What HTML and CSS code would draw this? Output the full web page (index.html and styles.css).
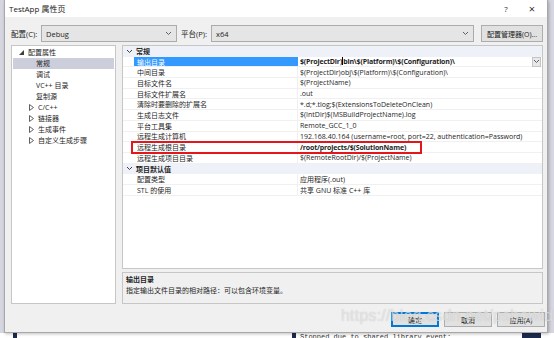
FILE: index.html
```html
<!DOCTYPE html>
<html lang="zh-CN">
<head>
    <meta charset="UTF-8">
    <meta name="viewport" content="width=device-width, initial-scale=1.0">
    <title>TestApp 属性页</title>
    <link rel="stylesheet" href="styles.css">
</head>
<body>
    <div class="screen">
        <div class="dialog">
            <div class="titlebar">
                <span class="title">TestApp 属性页</span>
                <span class="tb-btn tb-help">?</span>
                <span class="tb-btn tb-close">×</span>
            </div>
            <div class="body">
                <div class="config-row">
                    <span class="lbl">配置(C):</span>
                    <div class="combo combo-config">
                        <span>Debug</span>
                        <svg class="chev" width="7" height="5" viewBox="0 0 7 5"><polyline points="1,1 3.5,3.5 6,1" fill="none" stroke="#606060" stroke-width="1"/></svg>
                    </div>
                    <span class="lbl lbl-platform">平台(P):</span>
                    <div class="combo combo-platform">
                        <span>x64</span>
                        <svg class="chev" width="7" height="5" viewBox="0 0 7 5"><polyline points="1,1 3.5,3.5 6,1" fill="none" stroke="#606060" stroke-width="1"/></svg>
                    </div>
                    <button class="btn btn-manager">配置管理器(O)...</button>
                </div>

                <div class="main">
                    <ul class="tree">
                        <li class="node">
                            <svg class="tri" width="5" height="5" viewBox="0 0 5 5"><polygon points="5,0 5,5 0,5" fill="#404040"/></svg>
                            配置属性
                        </li>
                        <li class="leaf selected">常规</li>
                        <li class="leaf">调试</li>
                        <li class="leaf">VC++ 目录</li>
                        <li class="leaf">复制源</li>
                        <li class="branch">
                            <svg class="tri" width="5" height="7" viewBox="0 0 5 7"><polygon points="0.5,0.5 4.5,3.5 0.5,6.5" fill="none" stroke="#606060" stroke-width="1"/></svg>
                            C/C++
                        </li>
                        <li class="branch">
                            <svg class="tri" width="5" height="7" viewBox="0 0 5 7"><polygon points="0.5,0.5 4.5,3.5 0.5,6.5" fill="none" stroke="#606060" stroke-width="1"/></svg>
                            链接器
                        </li>
                        <li class="branch">
                            <svg class="tri" width="5" height="7" viewBox="0 0 5 7"><polygon points="0.5,0.5 4.5,3.5 0.5,6.5" fill="none" stroke="#606060" stroke-width="1"/></svg>
                            生成事件
                        </li>
                        <li class="branch">
                            <svg class="tri" width="5" height="7" viewBox="0 0 5 7"><polygon points="0.5,0.5 4.5,3.5 0.5,6.5" fill="none" stroke="#606060" stroke-width="1"/></svg>
                            自定义生成步骤
                        </li>
                    </ul>

                    <div class="right">
                        <div class="grid">
                            <div class="row category">
                                <svg class="cat-chev" width="7" height="5" viewBox="0 0 7 5"><polyline points="1,1 3.5,3.5 6,1" fill="none" stroke="#404040" stroke-width="1"/></svg>
                                <span class="cat-name">常规</span>
                            </div>
                            <div class="row selected">
                                <span class="gutter"></span>
                                <span class="name">输出目录</span>
                                <span class="value strong">$(ProjectDir)<i class="caret"></i>bin\$(Platform)\$(Configuration)\</span>
                                <span class="drop">
                                    <svg width="7" height="5" viewBox="0 0 7 5"><polyline points="1,1 3.5,3.5 6,1" fill="none" stroke="#606060" stroke-width="1"/></svg>
                                </span>
                            </div>
                            <div class="row"><span class="gutter"></span><span class="name">中间目录</span><span class="value">$(ProjectDir)obj\$(Platform)\$(Configuration)\</span></div>
                            <div class="row"><span class="gutter"></span><span class="name">目标文件名</span><span class="value">$(ProjectName)</span></div>
                            <div class="row"><span class="gutter"></span><span class="name">目标文件扩展名</span><span class="value">.out</span></div>
                            <div class="row"><span class="gutter"></span><span class="name">清除时要删除的扩展名</span><span class="value">*.d;*.tlog;$(ExtensionsToDeleteOnClean)</span></div>
                            <div class="row"><span class="gutter"></span><span class="name">生成日志文件</span><span class="value">$(IntDir)$(MSBuildProjectName).log</span></div>
                            <div class="row"><span class="gutter"></span><span class="name">平台工具集</span><span class="value">Remote_GCC_1_0</span></div>
                            <div class="row"><span class="gutter"></span><span class="name">远程生成计算机</span><span class="value">192.168.40.164 (username=root, port=22, authentication=Password)</span></div>
                            <div class="row"><span class="gutter"></span><span class="name">远程生成根目录</span><span class="value strong">/root/projects/$(SolutionName)</span></div>
                            <div class="row"><span class="gutter"></span><span class="name">远程生成项目目录</span><span class="value">$(RemoteRootDir)/$(ProjectName)</span></div>
                            <div class="row category">
                                <svg class="cat-chev" width="7" height="5" viewBox="0 0 7 5"><polyline points="1,1 3.5,3.5 6,1" fill="none" stroke="#404040" stroke-width="1"/></svg>
                                <span class="cat-name">项目默认值</span>
                            </div>
                            <div class="row"><span class="gutter"></span><span class="name">配置类型</span><span class="value">应用程序(.out)</span></div>
                            <div class="row"><span class="gutter"></span><span class="name">STL 的使用</span><span class="value">共享 GNU 标准 C++ 库</span></div>

                            <div class="mark"></div>
                        </div>
                        <div class="desc">
                            <div class="desc-title">输出目录</div>
                            <div class="desc-text">指定输出文件目录的相对路径：可以包含环境变量。</div>
                        </div>
                    </div>
                </div>

                <div class="actions">
                    <button class="btn btn-ok">确定</button>
                    <button class="btn">取消</button>
                    <button class="btn">应用(A)</button>
                </div>
            </div>
            <div class="watermark">https://blog.csdn.net/psbowid</div>
        </div>
        <div class="below">
            <span class="blk blk-a"></span>
            <span class="blk blk-b"></span>
            <span class="console">Stopped due to shared library event:</span>
            <span class="blk blk-c"></span>
        </div>
    </div>
</body>
</html>
```

FILE: styles.css
```css
* {
    box-sizing: border-box;
}

body {
    margin: 0;
    padding: 0;
    font-family: "Open Sans", "Noto Sans CJK SC", sans-serif;
    font-size: 7px;
    color: #1e1e1e;
    background-color: #d6d6e0;
}

.screen {
    width: 554px;
    height: 338px;
    overflow: hidden;
}

.dialog {
    position: relative;
    width: 544px;
    height: 333px;
    margin-left: 4px;
    background-color: #f0f0f0;
    border: 1px solid #a8a8a8;
    border-top: none;
    box-shadow: 1px 1px 3px rgba(0, 0, 0, 0.25);
}

/* title bar */
.titlebar {
    height: 17px;
    background-color: #ffffff;
    display: flex;
    align-items: center;
    padding-left: 4px;
    font-size: 8px;
}

.title {
    flex: 1;
    color: #202020;
}

.tb-btn {
    width: 26px;
    text-align: center;
    color: #303030;
}

.tb-help {
    font-size: 8px;
}

.tb-close {
    font-size: 11px;
    margin-right: 2px;
}

/* body */
.body {
    padding: 8px 4px 0 6px;
}

.config-row {
    display: flex;
    align-items: center;
    height: 17px;
    font-size: 7.5px;
}

.lbl {
    width: 30px;
    color: #202020;
}

.lbl-platform {
    margin-left: 4px;
}

.combo {
    height: 17px;
    display: flex;
    align-items: center;
    justify-content: space-between;
    padding: 0 4px 0 4px;
    background-color: #e5e5e5;
    border: 1px solid #acacac;
}

.combo-config {
    width: 136px;
}

.combo-platform {
    width: 263px;
}

.btn {
    font-family: "Open Sans", "Noto Sans CJK SC", sans-serif;
    font-size: 7px;
    color: #202020;
    background-color: #e1e1e1;
    border: 1px solid #adadad;
    padding: 0;
    height: 15px;
}

.btn-manager {
    width: 62px;
    height: 17px;
    margin-left: 7px;
}

/* main area */
.main {
    display: flex;
    gap: 6px;
    margin-top: 3px;
    height: 259px;
}

.tree {
    list-style-type: none;
    margin: 0;
    padding: 1px 1px;
    width: 105px;
    background-color: #ffffff;
    border: 1px solid #c6c6c6;
}

.tree li {
    height: 11px;
    line-height: 11px;
    display: flex;
    align-items: center;
    white-space: nowrap;
}

.tree .tri {
    margin-right: 4px;
}

.tree .node {
    padding-left: 6px;
}

.tree .leaf {
    padding-left: 23px;
}

.tree .branch {
    padding-left: 16px;
}

.tree .selected {
    background-color: #cccedb;
}

.right {
    width: 421px;
    display: flex;
    flex-direction: column;
    gap: 3px;
}

/* property grid */
.grid {
    position: relative;
    height: 224px;
    background-color: #ffffff;
    border: 1px solid #c6c6c6;
}

.row {
    display: flex;
    align-items: center;
    height: 10.7px;
    border-bottom: 1px solid #f0f0f0;
    white-space: nowrap;
}

.row.category {
    background-color: #eff1f8;
    border-bottom: none;
}

.cat-chev {
    margin-left: 3px;
}

.cat-name {
    margin-left: 3px;
    font-weight: bold;
}

.gutter {
    width: 11px;
    height: 100%;
}

.name {
    width: 164px;
    height: 100%;
    padding-left: 3px;
    display: flex;
    align-items: center;
    border-right: 1px solid #f0f0f0;
}

.value {
    flex: 1;
    padding-left: 2px;
}

.strong {
    font-weight: bold;
    letter-spacing: -0.15px;
}

.row.selected .name {
    background-color: #3399ff;
    color: #ffffff;
    border-right: none;
}

.caret {
    display: inline-block;
    width: 1px;
    height: 8px;
    background-color: #000000;
    vertical-align: -1px;
}

.drop {
    width: 9px;
    height: 10px;
    margin-right: 1px;
    display: flex;
    align-items: center;
    justify-content: center;
    background-color: #e8e8e8;
    border: 1px solid #c4c4c4;
}

.mark {
    position: absolute;
    left: 8px;
    top: 95px;
    width: 291px;
    height: 13px;
    border: 2px solid #e4161b;
}

/* description */
.desc {
    height: 32px;
    border: 1px solid #c6c6c6;
    padding: 1px 3px;
}

.desc-title {
    font-weight: bold;
    line-height: 11px;
}

.desc-text {
    line-height: 11px;
}

/* bottom buttons */
.actions {
    display: flex;
    justify-content: flex-end;
    gap: 5px;
    margin-top: 8px;
    margin-right: -2px;
}

.actions .btn {
    width: 48px;
}

.btn-ok {
    border: 1px solid #0078d7;
    box-shadow: inset 0 0 0 1px #0078d7;
}

.watermark {
    position: absolute;
    left: 336px;
    top: 307px;
    font-family: "Liberation Sans", sans-serif;
    font-size: 16px;
    color: rgba(255, 255, 255, 0.55);
    text-shadow: 0 0 1px rgba(120, 120, 120, 0.45);
    letter-spacing: 0.2px;
}

/* window behind the dialog */
.below {
    height: 5px;
    display: flex;
    background-color: #ffffff;
    overflow: hidden;
}

.blk {
    height: 5px;
    background-color: #1c2a4e;
}

.blk-a {
    width: 4px;
    margin-left: 13px;
}

.blk-b {
    width: 4px;
    margin-left: 275px;
}

.console {
    font-family: "Liberation Mono", monospace;
    font-size: 7px;
    line-height: 7px;
    margin-left: 4px;
    margin-top: 1px;
    width: 222px;
    color: #303030;
}

.blk-c {
    width: 19px;
}
```
